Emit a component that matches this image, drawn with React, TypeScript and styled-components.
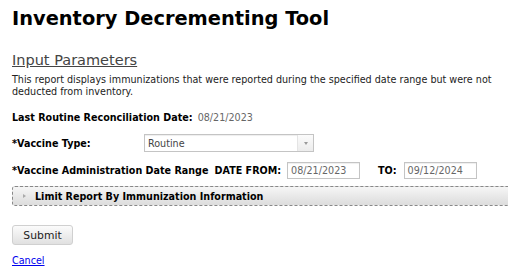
import React from "react";
import styled, { createGlobalStyle } from "styled-components";

const GlobalStyle = createGlobalStyle`
  body {
    margin: 0;
    background: #fff;
    font-family: "DejaVu Sans", Verdana, sans-serif;
    font-size: 9.6px;
    color: #000;
    overflow: hidden;
  }
`;

const Page = styled.div`
  padding: 8px 0 0 12px;
  width: 496px;
  overflow: hidden;
`;

const Title = styled.h1`
  font-size: 19.4px;
  font-weight: bold;
  margin: 0 0 21px 0;
  line-height: 22px;
`;

const SectionTitle = styled.h2`
  font-size: 14.5px;
  font-weight: normal;
  color: #444;
  text-decoration: underline;
  margin: 0 0 5px 0;
  line-height: 18px;
`;

const Description = styled.p`
  margin: 0 0 13px 0;
  line-height: 12px;
  width: 490px;
  color: #222;
`;

const InfoRow = styled.div`
  display: flex;
  gap: 5px;
  margin-bottom: 9px;
  line-height: 14px;
`;

const Label = styled.span`
  font-weight: bold;
`;

const Value = styled.span`
  color: #666;
`;

const FieldRow = styled.div<{ $labelWidth?: number; $gapBelow: number }>`
  display: flex;
  align-items: center;
  margin-bottom: ${(p) => p.$gapBelow}px;

  & > ${Label}:first-child {
    width: ${(p) => (p.$labelWidth ? `${p.$labelWidth}px` : "auto")};
  }
`;

const Select = styled.div`
  width: 165px;
  height: 16px;
  border: 1px solid #c4c4c4;
  display: flex;
  align-items: center;
  justify-content: space-between;
  padding-left: 3px;
  color: #444;
  box-shadow: inset 0 1px 1px #eee;
`;

const SelectArrow = styled.span`
  width: 15px;
  height: 16px;
  background: linear-gradient(#fbfbfb, #ececec);
  border-left: 1px solid #e4e4e4;
  display: flex;
  align-items: center;
  justify-content: center;
  &::after {
    content: "";
    border-left: 2.5px solid transparent;
    border-right: 2.5px solid transparent;
    border-top: 3px solid #999;
  }
`;

const DateInput = styled.div`
  width: 68px;
  height: 15px;
  border: 1px solid #c4c4c4;
  padding-left: 3px;
  display: flex;
  align-items: center;
  color: #666;
  box-shadow: inset 0 1px 1px #eee;
`;

const SubLabel = styled(Label)<{ $left: number; $right: number }>`
  margin-left: ${(p) => p.$left}px;
  margin-right: ${(p) => p.$right}px;
`;

const Accordion = styled.div`
  width: 504px;
  height: 18px;
  border: 1px dashed #888;
  border-radius: 3px;
  background: linear-gradient(#f6f6f6, #dcdcdc);
  display: flex;
  align-items: center;
  padding-left: 10px;
  margin: 0 0 19px 0;
  font-weight: bold;
  gap: 9px;
  &::before {
    content: "";
    border-top: 2.5px solid transparent;
    border-bottom: 2.5px solid transparent;
    border-left: 3px solid #aaa;
  }
`;

const SubmitButton = styled.button`
  font-family: "DejaVu Sans", Verdana, sans-serif;
  font-size: 10.8px;
  width: 61px;
  height: 20px;
  border: 1px solid #d0d0d0;
  border-radius: 3px;
  background: linear-gradient(#fbfbfb, #e0e0e0);
  color: #222;
  padding: 0;
  display: block;
  margin-bottom: 10px;
`;

const CancelLink = styled.a`
  color: #00e;
  text-decoration: underline;
  font-size: 9.6px;
  line-height: 12px;
`;

export default function App() {
  return (
    <Page>
      <GlobalStyle />
      <Title>Inventory Decrementing Tool</Title>
      <SectionTitle>Input Parameters</SectionTitle>
      <Description>
        This report displays immunizations that were reported during the specified date range but were not
        deducted from inventory.
      </Description>
      <InfoRow>
        <Label>Last Routine Reconciliation Date:</Label>
        <Value>08/21/2023</Value>
      </InfoRow>
      <FieldRow $labelWidth={132} $gapBelow={10}>
        <Label>*Vaccine Type:</Label>
        <Select>
          <span>Routine</span>
          <SelectArrow />
        </Select>
      </FieldRow>
      <FieldRow $gapBelow={7}>
        <Label>*Vaccine Administration Date Range</Label>
        <SubLabel $left={6} $right={6}>DATE FROM:</SubLabel>
        <DateInput>08/21/2023</DateInput>
        <SubLabel $left={18} $right={7}>TO:</SubLabel>
        <DateInput>09/12/2024</DateInput>
      </FieldRow>
      <Accordion>Limit Report By Immunization Information</Accordion>
      <SubmitButton>Submit</SubmitButton>
      <CancelLink href="#">Cancel</CancelLink>
    </Page>
  );
}
